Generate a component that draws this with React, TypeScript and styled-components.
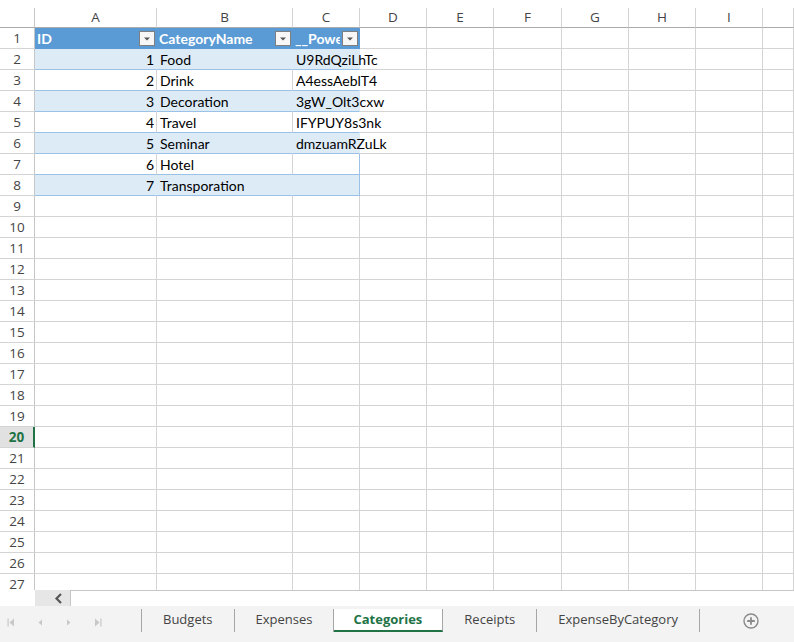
import React from 'react'
import styled, { createGlobalStyle, css } from 'styled-components'

const GlobalStyle = createGlobalStyle`
  html, body {
    margin: 0;
    padding: 0;
    background: #fff;
    overflow: hidden;
  }
`

const GRID = '#d4d4d4'
const TABLE_LINE = '#9bc2e6'
const BAND = '#ddebf7'
const HEAD = '#5b9bd5'
const GREEN = '#217346'

const Window = styled.div`
  width: 794px;
  height: 642px;
  display: flex;
  flex-direction: column;
  overflow: hidden;
  background: #fff;
`

const Sheet = styled.div`
  flex: 0 0 590px;
  display: grid;
  grid-template-columns: 35px 122px 136px 67px 67px 67px 68px 67px 67px 67px 1fr;
  grid-template-rows: 28px repeat(27, 21px);
  overflow: hidden;
`

const Corner = styled.div`
  align-self: end;
  height: 20px;
  box-sizing: border-box;
  border-right: 1px solid #c6c6c6;
  border-bottom: 1px solid #ababab;
`

const ColHead = styled.div`
  align-self: end;
  height: 20px;
  box-sizing: border-box;
  border-right: 1px solid ${GRID};
  border-bottom: 1px solid #ababab;
  font-family: 'Open Sans', sans-serif;
  font-size: 13.5px;
  line-height: 18px;
  color: #444;
  text-align: center;
`

const RowHead = styled.div<{ $active?: boolean }>`
  box-sizing: border-box;
  border-right: 1px solid #c6c6c6;
  border-bottom: 1px solid ${GRID};
  font-family: 'Open Sans', sans-serif;
  font-size: 13.5px;
  line-height: 20px;
  color: #444;
  text-align: center;
  ${p => p.$active && css`
    background: #e1e1e1;
    color: ${GREEN};
    font-weight: 700;
    border-right: 2px solid ${GREEN};
  `}
`

const Cell = styled.div`
  box-sizing: border-box;
  border-right: 1px solid ${GRID};
  border-bottom: 1px solid ${GRID};
`

const TableCell = styled.div<{ $band?: boolean; $num?: boolean; $last?: boolean; $spill?: boolean }>`
  box-sizing: border-box;
  padding: 0 2px 0 3px;
  font-family: Lato, 'Open Sans', sans-serif;
  font-size: 14px;
  line-height: 21px;
  color: #000;
  white-space: nowrap;
  overflow: visible;
  text-align: ${p => (p.$num ? 'right' : 'left')};
  background: ${p => (p.$band ? BAND : 'transparent')};
  border-bottom: 1px solid ${TABLE_LINE};
  border-right: 1px solid
    ${p => {
      if (p.$last) {
        if (p.$spill) return p.$band ? BAND : 'transparent'
        return TABLE_LINE
      }
      return p.$band ? BAND : GRID
    }};
`

const HeadCell = styled.div`
  box-sizing: border-box;
  display: flex;
  align-items: center;
  gap: 2px;
  padding: 1px 1px 0 2px;
  background: ${HEAD};
  border-right: 1px solid ${HEAD};
  border-bottom: 1px solid ${HEAD};
  font-family: Lato, 'Open Sans', sans-serif;
  font-size: 14px;
  font-weight: 700;
  color: #fff;
  white-space: nowrap;
`

const HeadLabel = styled.span`
  flex: 1;
  min-width: 0;
  overflow: hidden;
`

const FilterButton = styled.span`
  flex: 0 0 16px;
  width: 16px;
  height: 15px;
  box-sizing: border-box;
  border: 1px solid #7f7f7f;
  background: #f7f7f7;
  display: flex;
  align-items: center;
  justify-content: center;
`

const ScrollRow = styled.div`
  flex: 0 0 16px;
  display: flex;
`

const RowPad = styled.div`
  width: 35px;
`

const ScrollButton = styled.div`
  width: 35px;
  background: #e6e6e6;
  display: flex;
  align-items: center;
  justify-content: center;
  padding-left: 11px;
  box-sizing: border-box;
`

const Track = styled.div`
  flex: 1;
  border-top: 1px solid #c6c6c6;
  border-left: 1px solid #c6c6c6;
`

const TabBar = styled.div`
  flex: 1;
  display: flex;
  align-items: flex-start;
  background: #f3f3f3;
  border-bottom: 2px solid #fbfbfb;
`

const Nav = styled.div`
  width: 141px;
  height: 36px;
  display: flex;
  align-items: center;
  gap: 21px;
  padding: 0 0 4px 7px;
  box-sizing: border-box;
`

const Tabs = styled.div`
  display: flex;
  margin-top: 3px;
  border-left: 1px solid #a6a6a6;
`

const Tab = styled.div<{ $active?: boolean }>`
  height: 23px;
  box-sizing: border-box;
  padding: 0 21px;
  border-right: 1px solid #a6a6a6;
  font-family: 'Open Sans', sans-serif;
  font-size: 13px;
  line-height: 21px;
  color: #444;
  ${p => p.$active && css`
    padding: 0 20px 0 19px;
    background: #fff;
    color: ${GREEN};
    font-weight: 700;
    border-bottom: 2px solid ${GREEN};
  `}
`

const AddButton = styled.div`
  margin: 7px 0 0 43px;
  width: 16px;
  height: 16px;
`

const columns = ['A', 'B', 'C', 'D', 'E', 'F', 'G', 'H', 'I', '']

const rows: [string, string, string][] = [
  ['1', 'Food', 'U9RdQziLhTc'],
  ['2', 'Drink', 'A4essAeblT4'],
  ['3', 'Decoration', '3gW_Olt3cxw'],
  ['4', 'Travel', 'IFYPUY8s3nk'],
  ['5', 'Seminar', 'dmzuamRZuLk'],
  ['6', 'Hotel', ''],
  ['7', 'Transporation', ''],
]

const headers = ['ID', 'CategoryName', '__PowerAppsId__']

const Arrow = () => (
  <svg width="8" height="6" viewBox="0 0 8 6">
    <path d="M1 1.5 L4 4.5 L7 1.5 Z" fill="#555" />
  </svg>
)

const NavIcon = ({ kind }: { kind: 'first' | 'prev' | 'next' | 'last' }) => (
  <svg width="8" height="9" viewBox="0 0 8 9">
    {kind === 'first' && (
      <>
        <rect x="0.5" y="0.5" width="1.2" height="8" fill="#c8c8c8" />
        <path d="M7 0.5 L2.5 4.5 L7 8.5 Z" fill="#c8c8c8" />
      </>
    )}
    {kind === 'prev' && <path d="M6 1.5 L2.5 4.5 L6 7.5 Z" fill="#c8c8c8" />}
    {kind === 'next' && <path d="M2 1.5 L5.5 4.5 L2 7.5 Z" fill="#c8c8c8" />}
    {kind === 'last' && (
      <>
        <path d="M1 0.5 L5.5 4.5 L1 8.5 Z" fill="#c8c8c8" />
        <rect x="6.3" y="0.5" width="1.2" height="8" fill="#c8c8c8" />
      </>
    )}
  </svg>
)

const sheetTabs = ['Budgets', 'Expenses', 'Categories', 'Receipts', 'ExpenseByCategory']

export default function App() {
  const gridRows = []
  for (let r = 1; r <= 27; r++) {
    const cells = []
    cells.push(
      <RowHead key="h" $active={r === 20}>
        {r}
      </RowHead>
    )
    for (let c = 0; c < 10; c++) {
      if (r === 1 && c < 3) {
        cells.push(
          <HeadCell key={c}>
            <HeadLabel>{headers[c]}</HeadLabel>
            <FilterButton>
              <Arrow />
            </FilterButton>
          </HeadCell>
        )
      } else if (r >= 2 && r <= 8 && c < 3) {
        const row = rows[r - 2]
        const band = r % 2 === 0
        cells.push(
          <TableCell key={c} $band={band} $num={c === 0} $last={c === 2} $spill={c === 2 && row[2] !== ''}>
            {row[c]}
          </TableCell>
        )
      } else {
        cells.push(<Cell key={c} />)
      }
    }
    gridRows.push(<React.Fragment key={r}>{cells}</React.Fragment>)
  }

  return (
    <Window>
      <GlobalStyle />
      <Sheet>
        <Corner />
        {columns.map((c, i) => (
          <ColHead key={i}>{c}</ColHead>
        ))}
        {gridRows}
      </Sheet>
      <ScrollRow>
        <RowPad />
        <ScrollButton>
          <svg width="9" height="11" viewBox="0 0 9 11">
            <path d="M7 1 L2.5 5.5 L7 10" fill="none" stroke="#555" strokeWidth="2.2" />
          </svg>
        </ScrollButton>
        <Track />
      </ScrollRow>
      <TabBar>
        <Nav>
          <NavIcon kind="first" />
          <NavIcon kind="prev" />
          <NavIcon kind="next" />
          <NavIcon kind="last" />
        </Nav>
        <Tabs>
          {sheetTabs.map(t => (
            <Tab key={t} $active={t === 'Categories'}>
              {t}
            </Tab>
          ))}
        </Tabs>
        <AddButton>
          <svg width="16" height="16" viewBox="0 0 16 16">
            <circle cx="8" cy="8" r="7" fill="none" stroke="#8a8a8a" strokeWidth="1.4" />
            <path d="M8 4.2 V11.8 M4.2 8 H11.8" stroke="#8a8a8a" strokeWidth="1.8" />
          </svg>
        </AddButton>
      </TabBar>
    </Window>
  )
}
